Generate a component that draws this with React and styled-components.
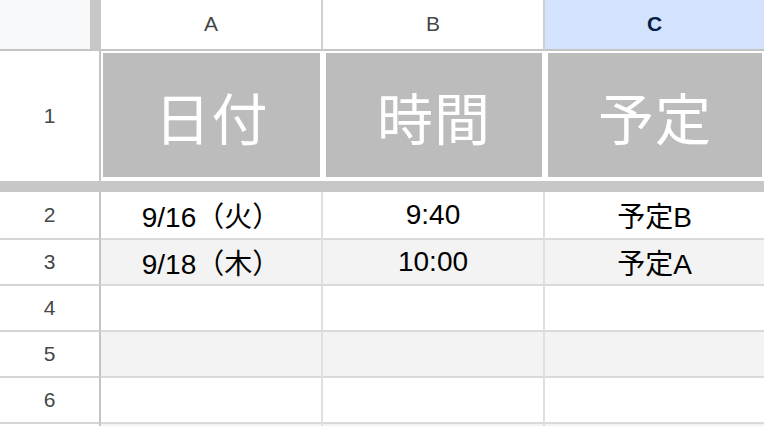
import React from 'react';
import styled, { createGlobalStyle } from 'styled-components';

const GlobalStyle = createGlobalStyle`
    html, body {
        margin: 0;
        padding: 0;
        background: #ffffff;
        overflow: hidden;
    }
    * {
        box-sizing: border-box;
    }
`;

const COLS = '101px 222px 222px 219px';

// Grade da planilha
const Sheet = styled.div`
    width: 764px;
    height: 426px;
    overflow: hidden;
    font-family: "Liberation Sans", "Noto Sans CJK JP", sans-serif;
`;

const Row = styled.div`
    display: grid;
    grid-template-columns: ${COLS};
    height: ${(p) => p.$h}px;
`;

const Corner = styled.div`
    background: #f8f9fa;
    border-right: 11px solid #c7c7c7;
    border-bottom: 2px solid #c4c4c4;
`;

const ColHead = styled.div`
    display: flex;
    align-items: center;
    justify-content: center;
    background: ${(p) => (p.$active ? '#d3e3fd' : '#ffffff')};
    color: ${(p) => (p.$active ? '#041e49' : '#444746')};
    font-weight: ${(p) => (p.$active ? 700 : 400)};
    font-size: 21px;
    border-right: 2px solid #cfcfcf;
    border-bottom: 2px solid #c4c4c4;
    padding-bottom: 2px;
    &:last-child {
        border-right: none;
    }
`;

const RowHead = styled.div`
    display: flex;
    align-items: center;
    justify-content: center;
    background: #ffffff;
    color: #444746;
    font-size: 21px;
    border-right: 2px solid #c4c4c4;
    border-bottom: ${(p) => (p.$noLine ? 'none' : '2px solid #d5d5d5')};
`;

const TitleCell = styled.div`
    background: #ffffff;
    padding: 2px 3px 4px 3px;
    &:nth-child(2) {
        padding-left: 2px;
    }
    &:last-child {
        padding-right: 2px;
    }
`;

const TitleFill = styled.div`
    height: 100%;
    background: #bcbcbc;
    color: #ffffff;
    display: flex;
    align-items: center;
    justify-content: center;
    font-family: "Noto Sans CJK JP", sans-serif;
    font-size: 56px;
    font-weight: 400;
    letter-spacing: 1px;
`;

const FreezeBar = styled.div`
    height: 11px;
    background: #c7c7c7;
`;

const Cell = styled.div`
    display: flex;
    align-items: center;
    justify-content: center;
    background: ${(p) => (p.$alt ? '#f3f3f3' : '#ffffff')};
    color: #000000;
    font-size: 28px;
    border-right: 2px solid #e0e0e0;
    border-bottom: 2px solid #dadada;
    &:last-child {
        border-right: none;
    }
`;

const titulos = ['日付', '時間', '予定'];

const linhas = [
    ['9/16（火）', '9:40', '予定B'],
    ['9/18（木）', '10:00', '予定A'],
    ['', '', ''],
    ['', '', ''],
    ['', '', ''],
    ['', '', ''],
];

export default () => (
    <Sheet>
        <GlobalStyle />
        <Row $h={51}>
            <Corner />
            <ColHead>A</ColHead>
            <ColHead>B</ColHead>
            <ColHead $active>C</ColHead>
        </Row>
        <Row $h={130}>
            <RowHead $noLine>1</RowHead>
            {titulos.map((t) => (
                <TitleCell key={t}>
                    <TitleFill>{t}</TitleFill>
                </TitleCell>
            ))}
        </Row>
        <FreezeBar />
        {linhas.map((linha, i) => (
            <Row key={i} $h={i === 0 ? 48 : 46}>
                {/* a linha 7 fica cortada na borda, sem número visível */}
                <RowHead>{i < 5 ? i + 2 : ''}</RowHead>
                {linha.map((valor, j) => (
                    <Cell key={j} $alt={i % 2 === 1}>{valor}</Cell>
                ))}
            </Row>
        ))}
    </Sheet>
);
